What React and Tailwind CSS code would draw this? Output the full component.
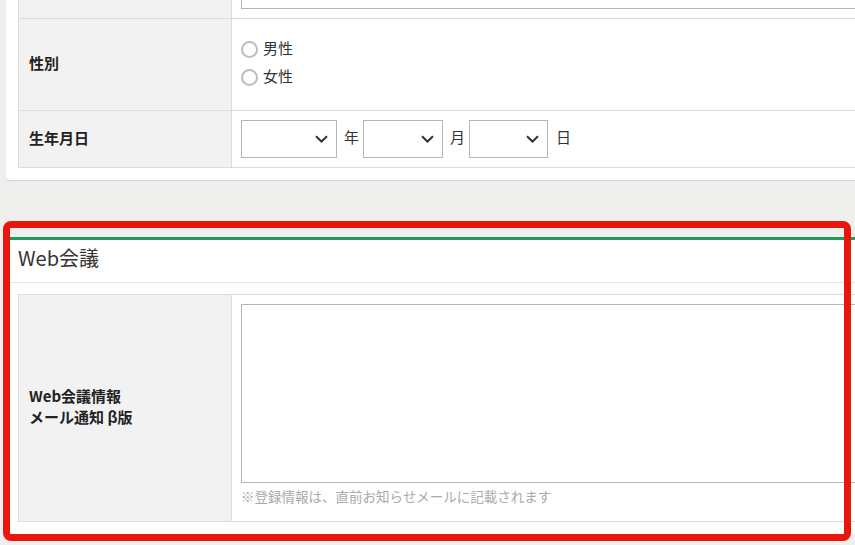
import React from 'react';

const font = { fontFamily: '"Noto Sans CJK JP", "Noto Sans", sans-serif' };

const Chevron = () => (
  <svg width="13" height="8" viewBox="0 0 13 8" fill="none">
    <polyline points="1,1.2 6.5,6.5 12,1.2" stroke="#333" strokeWidth="2" />
  </svg>
);

const FakeSelect = ({ w }) => (
  <div className={`${w} h-[38px] border border-[#b5b5b5] bg-white flex items-center justify-end pr-[8px]`}>
    <Chevron />
  </div>
);

const Radio = ({ label }) => (
  <div className="flex items-center h-[28px]">
    <span className="w-[17px] h-[17px] rounded-full border-2 border-[#bdbdbd] bg-white" />
    <span className="ml-[5px] pb-[3px] text-[15px] text-[#333]">{label}</span>
  </div>
);

const Th = ({ children }) => (
  <th className="w-[213px] border border-[#dcdcdc] bg-[#f2f2f2] pl-[10px] pb-[4px] text-left align-middle text-[15px] font-bold leading-[21px] text-[#222]">
    {children}
  </th>
);

export default function App() {
  return (
    <div className="relative w-[855px] h-[545px] overflow-hidden bg-[#eff0ee]" style={font}>
      <div className="w-[1000px] pl-[6px]">
        {/* upper card, top is scrolled away */}
        <div className="-mt-[39px] bg-white rounded-b px-3 pb-3 shadow-[0_1px_1px_rgba(0,0,0,0.12)]">
          <table className="w-full border-collapse">
            <tbody>
              <tr>
                <Th>&nbsp;</Th>
                <td className="border border-[#dcdcdc] px-[9px] py-[9px]">
                  <div className="h-[38px] border border-[#b5b5b5] bg-white" />
                </td>
              </tr>
              <tr>
                <Th>性別</Th>
                <td className="h-[92px] border border-[#dcdcdc] px-[9px]">
                  <div className="flex flex-col -mt-[2px]">
                    <Radio label="男性" />
                    <Radio label="女性" />
                  </div>
                </td>
              </tr>
              <tr>
                <Th>生年月日</Th>
                <td className="border border-[#dcdcdc] px-[9px] py-[9px]">
                  <div className="flex items-center text-[15px] text-[#333]">
                    <FakeSelect w="w-[96px]" />
                    <span className="ml-[7px] mr-[4px] pb-[4px]">年</span>
                    <FakeSelect w="w-[80px]" />
                    <span className="ml-[7px] mr-[4px] pb-[4px]">月</span>
                    <FakeSelect w="w-[79px]" />
                    <span className="ml-[8px] pb-[4px]">日</span>
                  </div>
                </td>
              </tr>
            </tbody>
          </table>
        </div>

        {/* Web meeting card */}
        <div className="mt-[57px] bg-white border-t-[3px] border-[#229a5a]">
          <div className="h-[43px] flex items-center px-3 pb-[6px] border-b border-[#e6e6e6] text-[20px] text-[#333]">
            Web会議
          </div>
          <div className="px-3 pt-[11px] pb-3">
            <table className="w-full border-collapse">
              <tbody>
                <tr>
                  <Th>
                    Web会議情報
                    <br />
                    メール通知 β版
                  </Th>
                  <td className="border border-[#dcdcdc] px-[9px] pt-[9px] pb-[15px]">
                    <div className="h-[179px] border border-[#b5b5b5] bg-white" />
                    <p className="mt-[3px] text-[13.5px] leading-[20px] text-[#aaa]">
                      ※登録情報は、直前お知らせメールに記載されます
                    </p>
                  </td>
                </tr>
              </tbody>
            </table>
          </div>
        </div>
      </div>

      {/* red annotation frame */}
      <div className="absolute left-[3px] top-[221px] w-[848px] h-[320px] border-[7px] border-[#e8160d] rounded-[8px] pointer-events-none" />
    </div>
  );
}
